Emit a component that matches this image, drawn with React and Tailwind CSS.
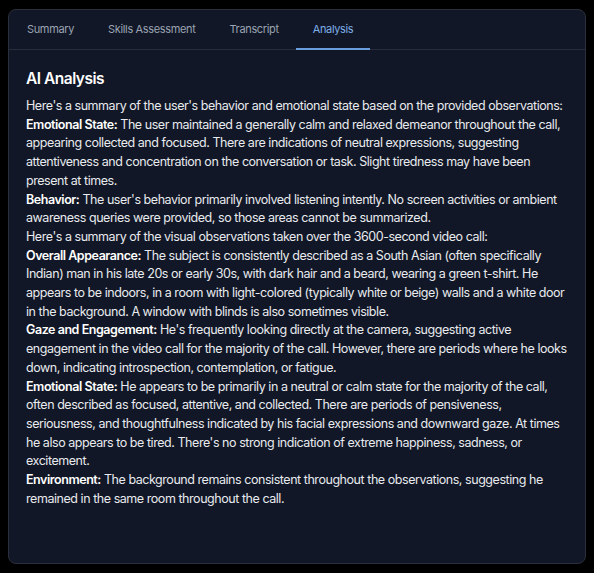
import React from 'react';

const tabs = ['Summary', 'Skills Assessment', 'Transcript', 'Analysis'];

export default function App() {
  const active = 'Analysis';

  return (
    <div className="min-h-screen bg-black p-2 pt-[9px]" style={{ fontFamily: 'Inter, "Noto Sans", sans-serif' }}>
      <div className="h-[555px] w-[578px] rounded-lg border border-[#2a2f3b] bg-[#111726]">
        <div className="flex border-b border-[#272d3a] px-px">
          {tabs.map(tab => (
            <div
              key={tab}
              className={`px-[17px] pt-[12px] pb-[11px] text-[11px] leading-[15px] tracking-[-0.35px] border-b-2 -mb-px ${
                tab === active ? 'border-[#6a9ddc] text-[#7eaee8]' : 'border-transparent text-[#9aa3b2]'
              }`}
            >
              {tab}
            </div>
          ))}
        </div>

        <div className="px-[17px] pt-[18px]">
          <h2 className="text-[15.5px] font-semibold leading-[22px] tracking-[-0.5px] text-white">AI Analysis</h2>
          <div className="mt-[7px] text-[12.5px] leading-[18.7px] tracking-[-0.45px] text-[#e8eaee]">
            <p>Here's a summary of the user's behavior and emotional state based on the provided observations:</p>
            <p>
              <span className="font-semibold text-white">Emotional State:</span> The user maintained a generally calm and relaxed demeanor throughout the call, appearing collected and focused. There are indications of neutral expressions, suggesting attentiveness and concentration on the conversation or task. Slight tiredness may have been present at times.
            </p>
            <p>
              <span className="font-semibold text-white">Behavior:</span> The user's behavior primarily involved listening intently. No screen activities or ambient awareness queries were provided, so those areas cannot be summarized.
            </p>
            <p>Here's a summary of the visual observations taken over the 3600-second video call:</p>
            <p>
              <span className="font-semibold text-white">Overall Appearance:</span> The subject is consistently described as a South Asian (often specifically Indian) man in his late 20s or early 30s, with dark hair and a beard, wearing a green t-shirt. He appears to be indoors, in a room with light-colored (typically white or beige) walls and a white door in the background. A window with blinds is also sometimes visible.
            </p>
            <p>
              <span className="font-semibold text-white">Gaze and Engagement:</span> He's frequently looking directly at the camera, suggesting active engagement in the video call for the majority of the call. However, there are periods where he looks down, indicating introspection, contemplation, or fatigue.
            </p>
            <p>
              <span className="font-semibold text-white">Emotional State:</span> He appears to be primarily in a neutral or calm state for the majority of the call, often described as focused, attentive, and collected. There are periods of pensiveness, seriousness, and thoughtfulness indicated by his facial expressions and downward gaze. At times he also appears to be tired. There's no strong indication of extreme happiness, sadness, or excitement.
            </p>
            <p>
              <span className="font-semibold text-white">Environment:</span> The background remains consistent throughout the observations, suggesting he remained in the same room throughout the call.
            </p>
          </div>
        </div>
      </div>
    </div>
  );
}
